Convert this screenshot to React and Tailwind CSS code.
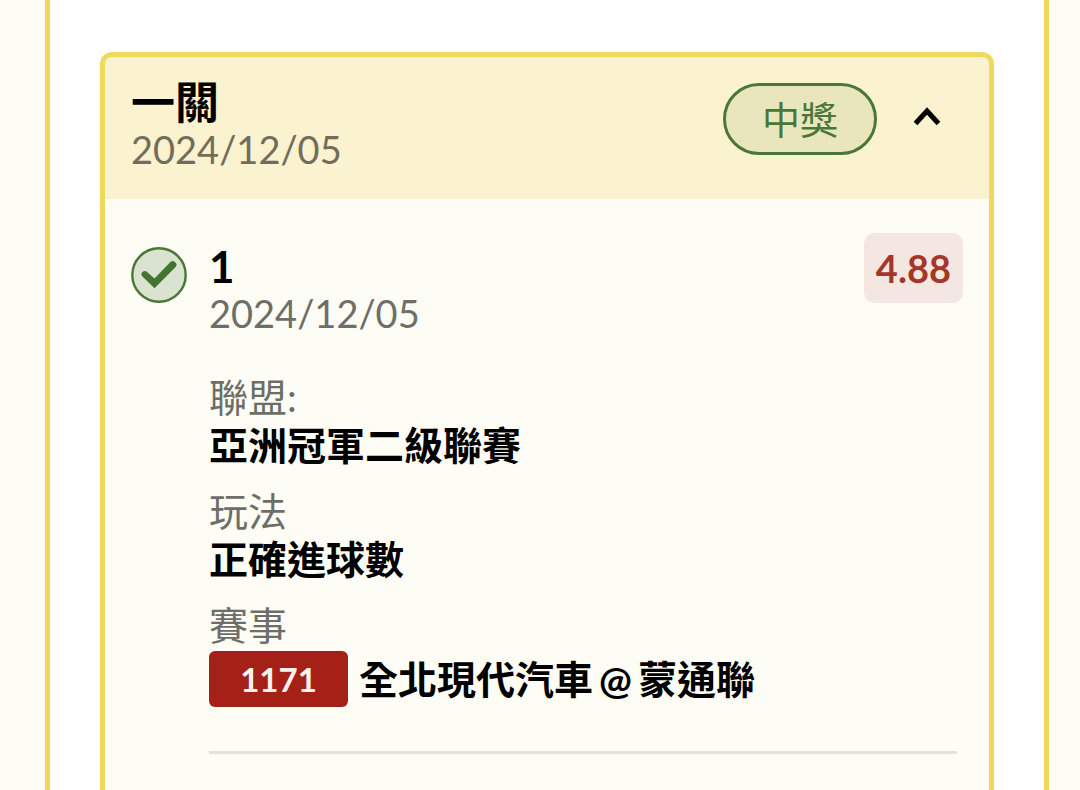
import React from 'react';

const ticket = {
  title: '一關',
  date: '2024/12/05',
  status: '中獎',
};

const selection = {
  index: '1',
  date: '2024/12/05',
  odds: '4.88',
  league: '亞洲冠軍二級聯賽',
  market: '正確進球數',
  code: '1171',
  away: '全北現代汽車',
  home: '蒙通聯',
};

const Chevron = () => (
  <svg className="h-7 w-7" viewBox="0 0 28 28" fill="none" stroke="currentColor" strokeWidth={5}>
    <path d="M2.5 18.5L14 6L25.5 18.5" />
  </svg>
);

const WonIcon = () => (
  <svg className="mt-3.5 h-14 w-14 shrink-0" viewBox="0 0 56 56" fill="none">
    <circle cx="28" cy="28" r="26.7" fill="#dae2d0" stroke="#4a7638" strokeWidth="2.4" />
    <path d="M11.2 29.2A3.2 3.2 0 0 1 15.8 24.8L23.5 31.6L38.9 15.6A3.6 3.6 0 0 1 44.6 20L23.5 41.2Z" fill="#43752f" />
  </svg>
);

const Field = ({ label, children }) => (
  <div className="mb-[18px]">
    <dt className="text-[39px] leading-[48px] text-[#6e6e69]">{label}</dt>
    <dd className="text-[39px] leading-[48px] font-bold text-black">{children}</dd>
  </div>
);

const Selection = ({ data }) => (
  <div className="flex flex-row items-start gap-[22px] px-[26px] pt-[34px]">
    <WonIcon />
    <div className="min-w-0 grow">
      <div className="flex flex-row items-start justify-between">
        <div className="pt-2.5">
          <div className="text-[44px] leading-[46px] font-bold text-black">{data.index}</div>
          <div className="text-[38px] leading-[48px] text-[#6e6e69]">{data.date}</div>
        </div>
        <div className="rounded-[10px] bg-[#f4e7e1] px-3 text-[38px] leading-[70px] font-bold text-[#a5372a]">
          {data.odds}
        </div>
      </div>
      <dl className="mr-1.5 border-b-3 border-[#e3e3dc] pt-9 pb-[26px]">
        <Field label="聯盟:">{data.league}</Field>
        <Field label="玩法">{data.market}</Field>
        <Field label="賽事">
          <span className="flex flex-row items-center gap-[11px] pt-0.5">
            <span className="w-[139px] rounded-md bg-[#a52118] text-center text-[33px] leading-[56px] text-[#fdf3ee]">
              {data.code}
            </span>
            <span className="flex flex-row items-baseline gap-1.5">
              <span>{data.away}</span>
              <span>@</span>
              <span>{data.home}</span>
            </span>
          </span>
        </Field>
      </dl>
    </div>
  </div>
);

const App = () => {

  const [open, set_open] = React.useState(true);

  return (
    <div className="min-h-screen flex bg-[#fefdf5] pr-[31px] pl-[45px] font-['Lato','Noto_Sans_CJK_TC',sans-serif]" lang="zh-Hant">
      <main className="flex grow flex-col border-x-5 border-[#f0d95f] bg-white px-[50px] pt-[52px]">
        <section className="grow rounded-t-xl border-5 border-b-0 border-[#f0d95f] bg-[#fefdf5]">
          <header className="flex flex-row items-start justify-between rounded-t-[7px] bg-[#fbf2cf] pt-[22px] pr-12 pb-[26px] pl-[26px]">
            <div>
              <h2 className="text-[44px] leading-[46px] font-bold text-black">{ticket.title}</h2>
              <div className="text-[38px] leading-[48px] text-[#726d59]">{ticket.date}</div>
            </div>
            <div className="flex flex-row items-center gap-9 pt-1">
              <span className="rounded-full border-3 border-[#4a7638] bg-[#e9e6be] px-9 text-[38px] leading-[66px] text-[#4a7638]">
                {ticket.status}
              </span>
              <button type="button" aria-label="收合" aria-expanded={open} onClick={() => set_open(!open)}>
                <Chevron />
              </button>
            </div>
          </header>
          {open ? (<Selection data={selection} />) : null}
        </section>
      </main>
    </div>
  );
};

export default App;
